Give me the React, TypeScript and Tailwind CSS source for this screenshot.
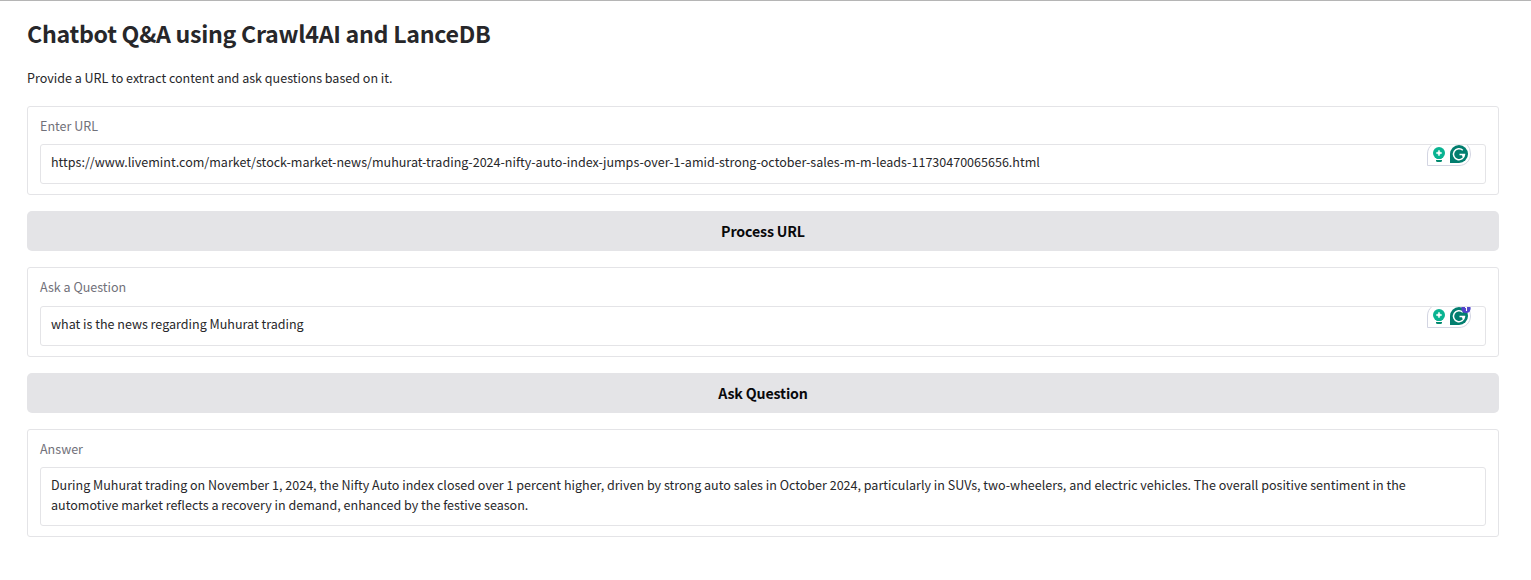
const F = "font-['Noto_Sans_CJK_SC','Noto_Sans',sans-serif]";

function Assist({ badge }: { badge?: boolean }) {
  return (
    <svg className="absolute right-3 top-[-1px]" width="48" height="24" viewBox="0 0 48 24">
      <path d="M7 .5Q2.500 4 2.500 10V21.500H34C41 21.500 45.500 16 45.500 10Q45.500 4 42 .5" fill="#fff" />
      <path d="M7 .5Q2.500 4 2.500 10V21.500H34C41 21.500 45.500 16 45.500 10Q45.500 4 42 .5" fill="none" stroke="#d3d5e2" />
      <path d="M6 .5H44" stroke="#e4e4e7" />
      <circle cx="14" cy="9" r="6" fill="#09b391" />
      <path d="M11.500 13h5v2h-5z" fill="#09b391" />
      <path d="M11 16h6v.5q0 1.500-1.500 1.500h-3q-1.500 0-1.500-1.500z" fill="#028a70" />
      <path d="M14 6l.9 2.100 2.100.9-2.100.9-.9 2.100-.9-2.100-2.100-.9 2.100-.9z" fill="#fff" stroke="#fff" strokeWidth=".5" />
      <path d="M25 19V10a9 9 0 1 1 9 9z" fill="#027e6f" />
      <path d="M37.800 6.200A5.500 5.500 0 1 0 39.500 10.500H34.500M39.500 10.500L37.300 12.300" fill="none" stroke="#fff" strokeWidth="1.500" />
      {badge && (
        <>
          <path d="M36.500 1A4.700 4.700 0 1 0 45.500 1z" fill="#5143ca" />
          <path d="M40 1.500h1.500V5" fill="none" stroke="#fff" strokeWidth="1.100" />
        </>
      )}
    </svg>
  );
}

type FieldProps = { label: string; text: string; badge?: boolean; helper?: boolean; className: string; labelGap?: string };

function Field({ label, text, badge, helper = true, className, labelGap = "mb-2" }: FieldProps) {
  return (
    <section className={`rounded-[3px] border border-[#e4e4e7] px-3 pt-[9px] ${className}`}>
      <div className={`h-5 text-[12.545px] leading-5 text-[#71717a] ${labelGap}`}>{label}</div>
      <div className="relative min-h-10 rounded-[3px] border border-[#e4e4e7] pl-2.5 pr-5 pt-[7px] pb-2.5 text-[12.545px] leading-5 text-[#27272a]">
        {text}
        {helper && <Assist badge={badge} />}
      </div>
    </section>
  );
}

function Action({ children }: { children: string }) {
  return (
    <button className="mt-4 block h-10 w-full rounded-[5px] bg-[#e4e4e7] pt-px text-[14.2px] font-semibold tracking-[-0.14px] text-[#09090b]">
      {children}
    </button>
  );
}

export default function App() {
  return (
    <main className={`h-[580px] border-t border-[#b5b5b5] bg-white pl-[27px] pr-8 text-[#27272a] ${F}`}>
      <h1 className="pt-4 text-[23.2px] font-semibold leading-8 tracking-[-0.29px]">Chatbot Q&amp;A using Crawl4AI and LanceDB</h1>
      <p className="mt-[19px] text-[12.545px] leading-5">Provide a URL to extract content and ask questions based on it.</p>
      <Field className="mt-[18px] h-[89px]" label="Enter URL" text="https://www.livemint.com/market/stock-market-news/muhurat-trading-2024-nifty-auto-index-jumps-over-1-amid-strong-october-sales-m-m-leads-11730470065656.html" />
      <Action>Process URL</Action>
      <Field className="mt-4 h-[90px]" labelGap="mb-[9px]" label="Ask a Question" text="what is the news regarding Muhurat trading" badge />
      <Action>Ask Question</Action>
      <Field className="mt-4 h-[108px]" label="Answer" helper={false} text="During Muhurat trading on November 1, 2024, the Nifty Auto index closed over 1 percent higher, driven by strong auto sales in October 2024, particularly in SUVs, two-wheelers, and electric vehicles. The overall positive sentiment in the automotive market reflects a recovery in demand, enhanced by the festive season." />
    </main>
  );
}
